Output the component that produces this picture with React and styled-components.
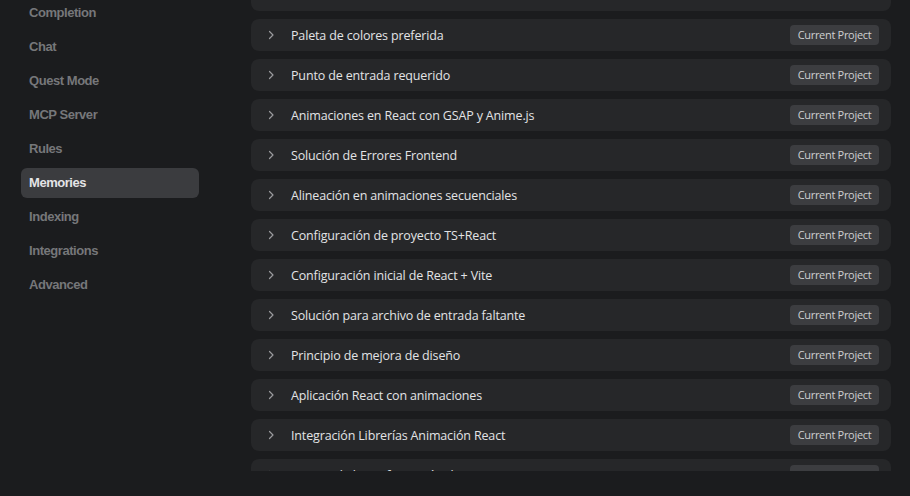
import React from 'react';
import styled, { createGlobalStyle } from 'styled-components';

const GlobalStyle = createGlobalStyle`
  html, body {
    margin: 0;
    padding: 0;
    background: #1b1c1e;
    overflow: hidden;
  }
  * { box-sizing: border-box; }
`;

const navItems = [
  'Completion',
  'Chat',
  'Quest Mode',
  'MCP Server',
  'Rules',
  'Memories',
  'Indexing',
  'Integrations',
  'Advanced',
];

const memories = [
  'Paleta de colores preferida',
  'Punto de entrada requerido',
  'Animaciones en React con GSAP y Anime.js',
  'Solución de Errores Frontend',
  'Alineación en animaciones secuenciales',
  'Configuración de proyecto TS+React',
  'Configuración inicial de React + Vite',
  'Solución para archivo de entrada faltante',
  'Principio de mejora de diseño',
  'Aplicación React con animaciones',
  'Integración Librerías Animación React',
  'Ajustes de la configuración de proyecto',
];

const Chevron = () => (
  <svg width="12" height="12" viewBox="0 0 12 12" fill="none">
    <path d="M4.5 2.5L8 6L4.5 9.5" stroke="#9a9b9e" strokeWidth="1.2" strokeLinecap="round" strokeLinejoin="round" />
  </svg>
);

const App = () => {
  return (
    <Page>
      <GlobalStyle />
      <Sidebar>
        {navItems.map(item => (
          <NavItem key={item} active={item === 'Memories'}>{item}</NavItem>
        ))}
      </Sidebar>
      <Content>
        <List>
          <Card />
          {memories.map(m => (
            <Card key={m}>
              <ChevronBox><Chevron /></ChevronBox>
              <Title>{m}</Title>
              <Badge>Current Project</Badge>
            </Card>
          ))}
        </List>
      </Content>
    </Page>
  );
};

export default App;

const Page = styled.div`
  display: flex;
  width: 910px;
  height: 496px;
  background: #1b1c1e;
  overflow: hidden;
`

const Sidebar = styled.nav`
  width: 251px;
  flex-shrink: 0;
  display: flex;
  flex-direction: column;
  gap: 4px;
  padding: 0 52px 0 21px;
  margin-top: -2px;
`

const NavItem = styled.div`
  height: 30px;
  line-height: 30px;
  padding-left: 8px;
  border-radius: 6px;
  font-family: "Liberation Sans", Arial, sans-serif;
  font-size: 13px;
  font-weight: 700;
  letter-spacing: -0.45px;
  color: ${p => p.active ? '#e4e4e6' : '#76777a'};
  background: ${p => p.active ? '#3b3c3f' : 'transparent'};
`

const Content = styled.main`
  width: 640px;
  height: 471px;
  overflow: hidden;
`

const List = styled.div`
  display: flex;
  flex-direction: column;
  gap: 8px;
  margin-top: -21px;
`

const Card = styled.div`
  height: 32px;
  flex-shrink: 0;
  display: flex;
  align-items: center;
  padding: 0 12px 0 14px;
  background: #262729;
  border-radius: 8px;
`

const ChevronBox = styled.div`
  width: 26px;
  display: flex;
  align-items: center;
`

const Title = styled.div`
  flex: 1;
  font-family: "Open Sans", "Noto Sans", sans-serif;
  font-size: 12.5px;
  letter-spacing: -0.15px;
  color: #e2e3e5;
  white-space: nowrap;
`

const Badge = styled.div`
  width: 89px;
  height: 20px;
  line-height: 20px;
  text-align: center;
  border-radius: 4px;
  background: #3c3d40;
  font-family: "Open Sans", "Noto Sans", sans-serif;
  font-size: 11px;
  letter-spacing: -0.3px;
  color: #cfd0d2;
`
